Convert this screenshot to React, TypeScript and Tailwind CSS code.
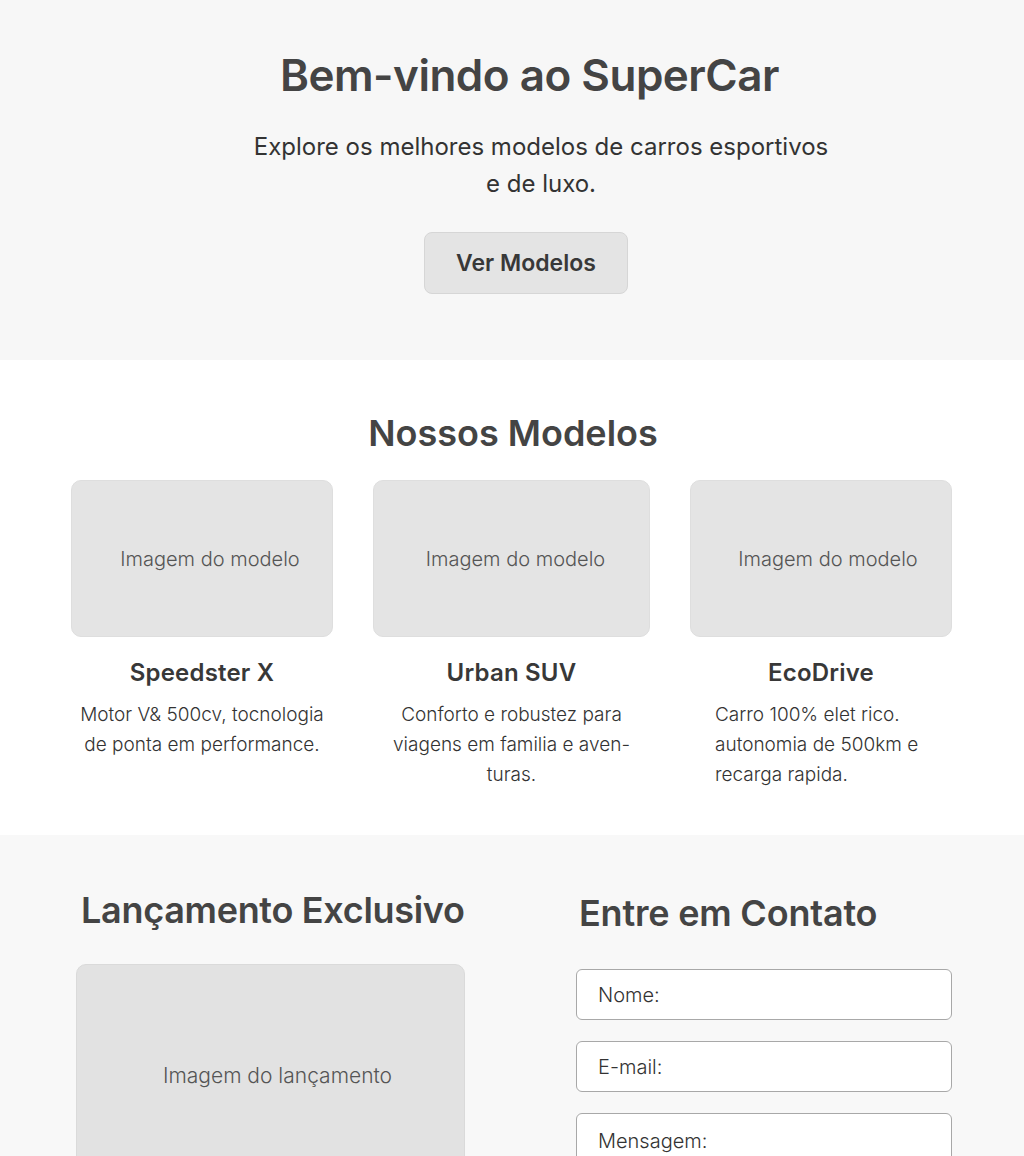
import React from "react";

type Modelo = {
    nome: string;
    descricao: string;
    largura: string;
    alinhamento: string;
    rotulo: string;
};

const modelos: Modelo[] = [
    {
        nome: "Speedster X",
        descricao: "Motor V& 500cv, tocnologia de ponta em performance.",
        largura: "w-[262px]",
        alinhamento: "text-center",
        rotulo: "ml-[16px]",
    },
    {
        nome: "Urban SUV",
        descricao: "Conforto e robustez para viagens em familia e aven-turas.",
        largura: "w-[277px]",
        alinhamento: "text-center px-4",
        rotulo: "ml-[8px]",
    },
    {
        nome: "EcoDrive",
        descricao: "Carro 100% elet rico. autonomia de 500km e recarga rapida.",
        largura: "w-[262px]",
        alinhamento: "text-left pl-[25px] pr-4",
        rotulo: "ml-[14px]",
    },
];

const App: React.FC = () => {
    return (
        <div className="min-h-[1156px] bg-[#f8f8f8] text-[#333] font-['Inter','Liberation_Sans',sans-serif]">
            {/* hero */}
            <section className="bg-[#f7f7f7] h-[360px] pt-[48px] flex flex-col items-center">
                <h1 className="text-[44px] leading-[54px] font-semibold text-[#444] tracking-[-0.5px] ml-[35px]">Bem-vindo ao SuperCar</h1>
                <p className="mt-[26px] text-[24px] leading-[37px] text-[#333] text-center w-[582px] ml-[58px]">
                    Explore os melhores modelos de carros esportivos e de luxo.
                </p>
                <button className="mt-[30px] w-[204px] h-[62px] rounded-lg bg-[#e4e4e4] border border-[#d6d6d6] text-[23px] font-semibold text-[#383838] ml-[28px]">
                    Ver Modelos
                </button>
            </section>

            {/* modelos */}
            <section className="bg-white h-[475px] pt-[50px] flex flex-col items-center">
                <h2 className="text-[36px] leading-[46px] font-semibold text-[#444] ml-[2px]">Nossos Modelos</h2>
                <div className="mt-[24px] flex gap-[40px] ml-[-1px]">
                    {modelos.map(m => (
                        <div key={m.nome} className={m.largura}>
                            <div className="h-[157px] rounded-[10px] bg-[#e4e4e4] border border-[#dedede] flex items-center justify-center">
                                <span className={`text-[20px] text-[#555] font-light ${m.rotulo}`}>Imagem do modelo</span>
                            </div>
                            <h3 className="mt-[20px] text-center text-[24px] leading-[32px] font-semibold text-[#383838] tracking-[0.2px]">{m.nome}</h3>
                            <p className={`mt-[11px] text-[19px] leading-[30px] text-[#333] font-light ${m.alinhamento}`}>{m.descricao}</p>
                        </div>
                    ))}
                </div>
            </section>

            {/* lancamento e contato */}
            <section className="bg-[#f8f8f8] pt-[52px] flex justify-center">
                <div className="flex gap-[111px] ml-[4px]">
                    <div className="w-[389px]">
                        <h2 className="pl-[5px] whitespace-nowrap text-[36px] leading-[46px] font-semibold text-[#444] tracking-[-0.3px]">Lançamento Exclusivo</h2>
                        <div className="mt-[31px] h-[260px] rounded-[10px] bg-[#e2e2e2] border border-[#dadada] flex items-center justify-center">
                            <span className="text-[21px] text-[#555] font-light mt-[-36px] ml-[14px]">Imagem do lançamento</span>
                        </div>
                    </div>
                    <div className="w-[376px]">
                        <h2 className="pl-[3px] mt-[3px] whitespace-nowrap text-[36px] leading-[46px] font-semibold text-[#444] tracking-[-0.2px]">Entre em Contato</h2>
                        <form className="mt-[33px] flex flex-col gap-[21px]">
                            <label className="h-[51px] rounded-md border border-[#a8a8a8] bg-white flex items-center px-[21px] text-[20px] text-[#333] font-light">Nome:</label>
                            <label className="h-[51px] rounded-md border border-[#a8a8a8] bg-white flex items-center px-[21px] text-[20px] text-[#333] font-light">E-mail:</label>
                            <label className="h-[120px] rounded-md border border-[#a8a8a8] bg-white flex items-start pt-[12px] px-[21px] text-[20px] text-[#333] font-light">Mensagem:</label>
                        </form>
                    </div>
                </div>
            </section>
        </div>
    );
};

export default App;
